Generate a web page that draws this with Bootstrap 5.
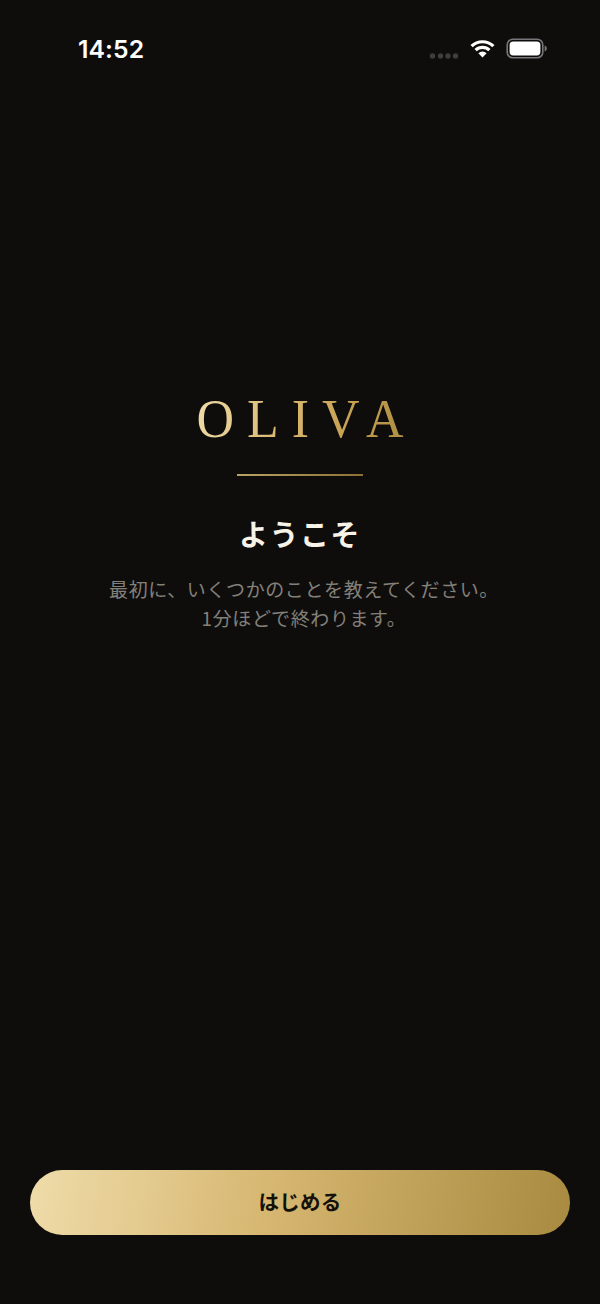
<!DOCTYPE html>
<html lang="ja">
<head>
<meta charset="utf-8">
<title>OLIVA</title>
<link href="https://cdn.jsdelivr.net/npm/bootstrap@5.3.0/dist/css/bootstrap.min.css" rel="stylesheet">
<style>
html,body{margin:0;background:#0e0d0c;}
.screen{height:1304px;width:600px;background:#0e0d0c;overflow:hidden;font-family:"Noto Sans CJK JP","Liberation Sans",sans-serif;}
.statusbar{height:98px;padding:34px 53px 0 78px;}
.clock{font-family:"Inter","Liberation Sans",sans-serif;font-weight:600;font-size:24.7px;line-height:30px;color:#fff;letter-spacing:.1px;}
.status-icons{gap:11px;height:30px;margin-top:-1px;}
.hero{padding-top:294px;}
.wordmark{font-family:"Liberation Serif",serif;font-size:52px;line-height:54px;letter-spacing:13px;margin-right:-13px;transform:scaleY(1.06);background:linear-gradient(100deg,#efdca8 0%,#d9b86f 40%,#c6a052 70%,#a88a40 100%);-webkit-background-clip:text;background-clip:text;color:transparent;}
.rule-line{width:126px;height:2px;margin-top:28px;background:linear-gradient(90deg,#b9a268,#8c7232);}
.welcome{font-size:29px;font-weight:700;line-height:40px;color:#f7f3e9;margin:37px 0 0;letter-spacing:1.5px;}
.intro{font-size:19px;line-height:29px;color:#83807a;margin:21px 0 0;padding-left:8px;letter-spacing:.6px;}
.start-btn{width:540px;height:65px;margin:0 30px 69px;padding:0 0 4px;border:0;border-radius:33px;background:linear-gradient(100deg,#efdcaa 0%,#d6b670 45%,#a88a40 100%);color:#14110a;font-size:20.5px;line-height:30px;font-weight:700;letter-spacing:.3px;}
.start-btn:hover,.start-btn:active{background:linear-gradient(100deg,#efdcaa 0%,#d6b670 45%,#a88a40 100%)!important;color:#14110a!important;}
</style>
</head>
<body>
<div class="screen d-flex flex-column">
  <div class="statusbar d-flex justify-content-between align-items-start">
    <span class="clock">14:52</span>
    <div class="status-icons d-flex align-items-center">
      <svg width="30" height="6" viewBox="0 0 30 6" class="mt-3" aria-hidden="true"><g fill="#3f3e3c"><circle cx="3.5" cy="3" r="2.7"/><circle cx="11.5" cy="3" r="2.7"/><circle cx="19" cy="3" r="2.7"/><circle cx="26.5" cy="3" r="2.7"/></g></svg>
      <svg width="25" height="19" viewBox="0 0 25 19" aria-hidden="true"><g fill="none" stroke="#fff" stroke-width="3.2"><path d="M1.6 7.2a15.6 15.6 0 0 1 21.8 0"/><path d="M5.6 11.2a10 10 0 0 1 13.8 0"/></g><path d="M8.4 14.2a6 6 0 0 1 8.2 0L12.5 18.6z" fill="#fff"/></svg>
      <svg width="41" height="21" viewBox="0 0 41 21" aria-hidden="true"><rect x="1.2" y="1.2" width="35.6" height="18.6" rx="5.6" fill="none" stroke="#77767a" stroke-width="1.6"/><rect x="3.6" y="3.6" width="30.8" height="13.8" rx="3.6" fill="#fff"/><path d="M38.6 7.5c1.5.4 2.2 1.6 2.2 3s-.7 2.6-2.2 3z" fill="#77767a"/></svg>
    </div>
  </div>
  <main class="hero flex-grow-1 d-flex flex-column align-items-center text-center">
    <div class="wordmark">OLIVA</div>
    <div class="rule-line"></div>
    <h1 class="welcome">ようこそ</h1>
    <p class="intro">最初に、いくつかのことを教えてください。<br>1分ほどで終わります。</p>
  </main>
  <button type="button" class="btn start-btn">はじめる</button>
</div>
<script src="https://cdn.jsdelivr.net/npm/bootstrap@5.3.0/dist/js/bootstrap.bundle.min.js"></script>
</body>
</html>
